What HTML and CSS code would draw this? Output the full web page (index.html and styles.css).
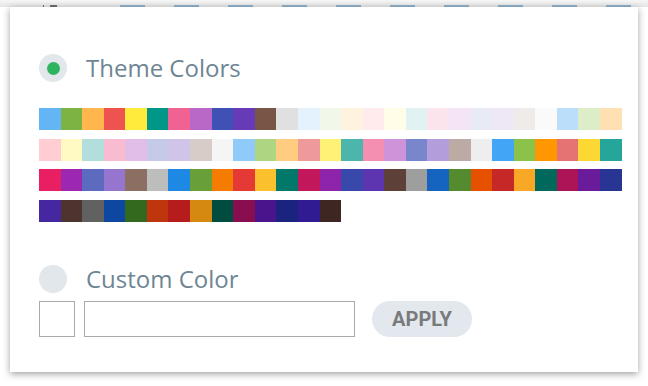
FILE: index.html
```html
<!DOCTYPE html>
<html lang="en">
<head>
    <meta charset="UTF-8">
    <meta name="viewport" content="width=device-width, initial-scale=1.0">
    <title>Color Picker</title>
    <link rel="stylesheet" href="styles.css">
</head>
<body>
    <!-- Faixa de fundo atrás do cartão -->
    <div class="backdrop"><span class="mark thin"></span><span class="mark"></span></div>

    <div class="color-card">
        <!-- Cores do tema -->
        <div class="option-row">
            <span class="radio checked"></span>
            <span class="option-label">Theme Colors</span>
        </div>

        <div class="swatches" id="swatches"></div>

        <!-- Cor personalizada -->
        <div class="option-row custom">
            <span class="radio"></span>
            <span class="option-label">Custom Color</span>
        </div>

        <div class="custom-inputs">
            <span class="preview-box"></span>
            <input type="text" class="hex-input">
            <button class="apply-button">APPLY</button>
        </div>
    </div>

    <script>
        const colors = [
            "#64B5F6","#7CB342","#FFB74D","#EF5350","#FFEB3B","#009688","#F06292","#BA68C8","#3F51B5","#673AB7",
            "#795548","#E0E0E0","#E3F2FD","#F1F8E9","#FFF3E0","#FFEBEE","#FFFDE7","#E0F2F1","#FCE4EC","#F3E5F5",
            "#E8EAF6","#EDE7F6","#EFEBE9","#FAFAFA","#BBDEFB","#DCEDC8","#FFE0B2",
            "#FFCDD2","#FFF9C4","#B2DFDB","#F8BBD0","#E1BEE7","#C5CAE9","#D1C4E9","#D7CCC8","#F5F5F5","#90CAF9",
            "#AED581","#FFCC80","#EF9A9A","#FFF176","#4DB6AC","#F48FB1","#CE93D8","#7986CB","#B39DDB","#BCAAA4",
            "#EEEEEE","#42A5F5","#8BC34A","#FF9800","#E57373","#FDD835","#26A69A",
            "#E91E63","#9C27B0","#5C6BC0","#9575CD","#8D6E63","#BDBDBD","#1E88E5","#689F38","#F57C00","#E53935",
            "#FBC02D","#00796B","#C2185B","#8E24AA","#3949AB","#5E35B1","#5D4037","#9E9E9E","#1565C0","#558B2F",
            "#E65100","#C62828","#F9A825","#00695C","#AD1457","#6A1B9A","#283593",
            "#4527A0","#4E342E","#616161","#0D47A1","#33691E","#BF360C","#B71C1C","#D68910","#004D40","#880E4F",
            "#4A148C","#1A237E","#311B92","#3E2723"
        ];

        const box = document.getElementById("swatches");
        colors.forEach(function (c) {
            const s = document.createElement("span");
            s.className = "swatch";
            s.style.backgroundColor = c;
            box.appendChild(s);
        });
    </script>
</body>
</html>
```

FILE: styles.css
```css
* {
  margin: 0;
  padding: 0;
  box-sizing: border-box;
}

body {
  font-family: "Open Sans", Arial, sans-serif;
  background-color: #fff;
  width: 648px;
  height: 386px;
  overflow: hidden;
}

.backdrop {
  height: 7px;
  display: flex;
  align-items: flex-end;
  gap: 2px;
  padding-left: 43px;
  background-color: #f0f0f0;
  background-image: repeating-linear-gradient(90deg, #8fb3cc 0, #8fb3cc 25px, transparent 25px, transparent 54px),
    linear-gradient(#f6f6f6, #e6e6e6);
  background-size: 520px 2px, 100% 100%;
  background-position: 120px 5px, 0 0;
  background-repeat: no-repeat;
}

.mark {
  display: block;
  width: 7px;
  height: 2px;
  background-color: #666;
  margin-left: 4px;
}

.mark.thin {
  width: 1px;
  margin-left: 0;
}

.color-card {
  margin: 0 10px;
  width: 628px;
  height: 365px;
  background-color: #fff;
  box-shadow: 0 2px 7px rgba(0, 0, 0, 0.38);
  padding: 47px 16px 0 29px;
}

.option-row {
  display: flex;
  align-items: center;
  height: 28px;
}

.radio {
  width: 28px;
  height: 28px;
  border-radius: 50%;
  background-color: #e1e7eb;
  display: flex;
  align-items: center;
  justify-content: center;
  margin-right: 19px;
}

.radio.checked::after {
  content: "";
  width: 13px;
  height: 13px;
  border-radius: 50%;
  background-color: #2db45c;
}

.option-label {
  font-size: 24px;
  color: #6e8593;
  line-height: 28px;
}

.swatches {
  display: flex;
  flex-wrap: wrap;
  width: 583px;
  margin-top: 26px;
}

.swatch {
  width: calc(100% / 27);
  height: 22px;
  margin-bottom: 8.7px;
}

.option-row.custom {
  margin-top: 34px;
}

.custom-inputs {
  display: flex;
  align-items: center;
  margin-top: 8px;
}

.preview-box {
  width: 36px;
  height: 36px;
  border: 1px solid #aaa;
  margin-right: 9px;
}

.hex-input {
  width: 271px;
  height: 36px;
  border: 1px solid #aaa;
  outline: none;
  margin-right: 17px;
}

.apply-button {
  width: 100px;
  height: 36px;
  border: none;
  border-radius: 18px;
  background-color: #e2e8ed;
  color: #7a7a7a;
  font-family: Roboto, Arial, sans-serif;
  font-weight: bold;
  font-size: 20px;
  cursor: pointer;
}
```
